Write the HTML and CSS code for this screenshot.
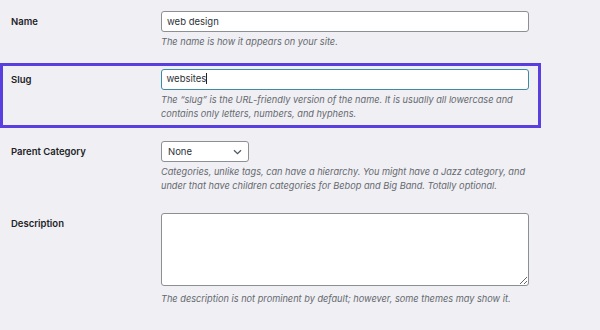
FILE: index.html
```html
<!DOCTYPE html>
<html lang="en">
<head>
<meta charset="utf-8">
<title>Edit Category</title>
<link rel="stylesheet" href="styles.css">
</head>
<body>
<div class="form">
  <div class="row row-name">
    <div class="label">Name</div>
    <div class="field">
      <div class="text-input">web design</div>
      <p class="help help-name">The name is how it appears on your site.</p>
    </div>
  </div>

  <div class="row row-slug highlight">
    <div class="label">Slug</div>
    <div class="field">
      <div class="text-input focused">websites<span class="caret"></span></div>
      <p class="help">The “slug” is the URL-friendly version of the name. It is usually all lowercase and contains only letters, numbers, and hyphens.</p>
    </div>
  </div>

  <div class="row row-parent">
    <div class="label">Parent Category</div>
    <div class="field">
      <div class="select">
        <span>None</span>
        <svg class="chevron" width="9" height="6" viewBox="0 0 9 6"><path d="M1 1.2 L4.5 4.6 L8 1.2" fill="none" stroke="#50575e" stroke-width="1.3"/></svg>
      </div>
      <p class="help">Categories, unlike tags, can have a hierarchy. You might have a Jazz category, and under that have children categories for Bebop and Big Band. Totally optional.</p>
    </div>
  </div>

  <div class="row row-desc">
    <div class="label">Description</div>
    <div class="field">
      <textarea class="textarea" aria-label="Description"></textarea>
      <p class="help help-desc">The description is not prominent by default; however, some themes may show it.</p>
    </div>
  </div>

  <div class="actions">
    <button class="button-primary" type="button">Update</button>
  </div>
</div>
</body>
</html>
```
FILE: styles.css
```css
html, body {
  margin: 0;
  padding: 0;
  background: #f0eff3;
  font-family: Inter, "Liberation Sans", sans-serif;
  color: #1d2327;
  overflow: hidden;
}

.form {
  padding-top: 11px;
  width: 541px;
}

.row {
  display: flex;
  padding-left: 11px;
}

.label {
  width: 150px;
  flex: none;
  font-size: 9.5px;
  font-weight: 600;
  line-height: 21px;
  color: #1d2327;
}

.field {
  width: 368px;
  flex: none;
}

.text-input {
  box-sizing: border-box;
  height: 21px;
  border: 1px solid #8c8f94;
  border-radius: 3px;
  background: #fff;
  font-size: 9.5px;
  line-height: 19px;
  padding: 0 5px;
  color: #2c3338;
}

.text-input.focused {
  border: 1.5px solid #3d8aa6;
  line-height: 18px;
  padding-left: 4.5px;
}

.caret {
  display: inline-block;
  width: 1px;
  height: 11px;
  background: #1d2327;
  vertical-align: -2px;
}

.help {
  margin: 3px 0 0;
  font-size: 9.2px;
  line-height: 14px;
  font-style: italic;
  color: #646970;
}

.highlight {
  margin-top: 14px;
  border: 3px solid #5a3fe0;
  padding: 3px 0 4px 8px;
}

.row-parent {
  margin-top: 13px;
}

.select {
  box-sizing: border-box;
  width: 88px;
  height: 21px;
  border: 1px solid #8c8f94;
  border-radius: 3px;
  background: #fff;
  display: flex;
  align-items: center;
  justify-content: space-between;
  padding: 0 6px 0 6px;
  font-size: 9.5px;
  color: #2c3338;
}

.row-desc {
  margin-top: 20px;
}

.textarea {
  display: block;
  box-sizing: border-box;
  width: 368px;
  height: 73px;
  margin: 0;
  border: 1px solid #8c8f94;
  border-radius: 3px;
  background: #fff;
  resize: vertical;
}

.help-desc {
  margin-top: 6px;
}

.actions {
  padding: 23px 0 0 11px;
}

.button-primary {
  width: 44px;
  height: 24px;
  border: 1px solid #2271b1;
  border-radius: 3px;
  background: #2271b1;
  color: #fff;
  font-family: Inter, "Liberation Sans", sans-serif;
  font-size: 9.5px;
  padding: 0;
}
```
